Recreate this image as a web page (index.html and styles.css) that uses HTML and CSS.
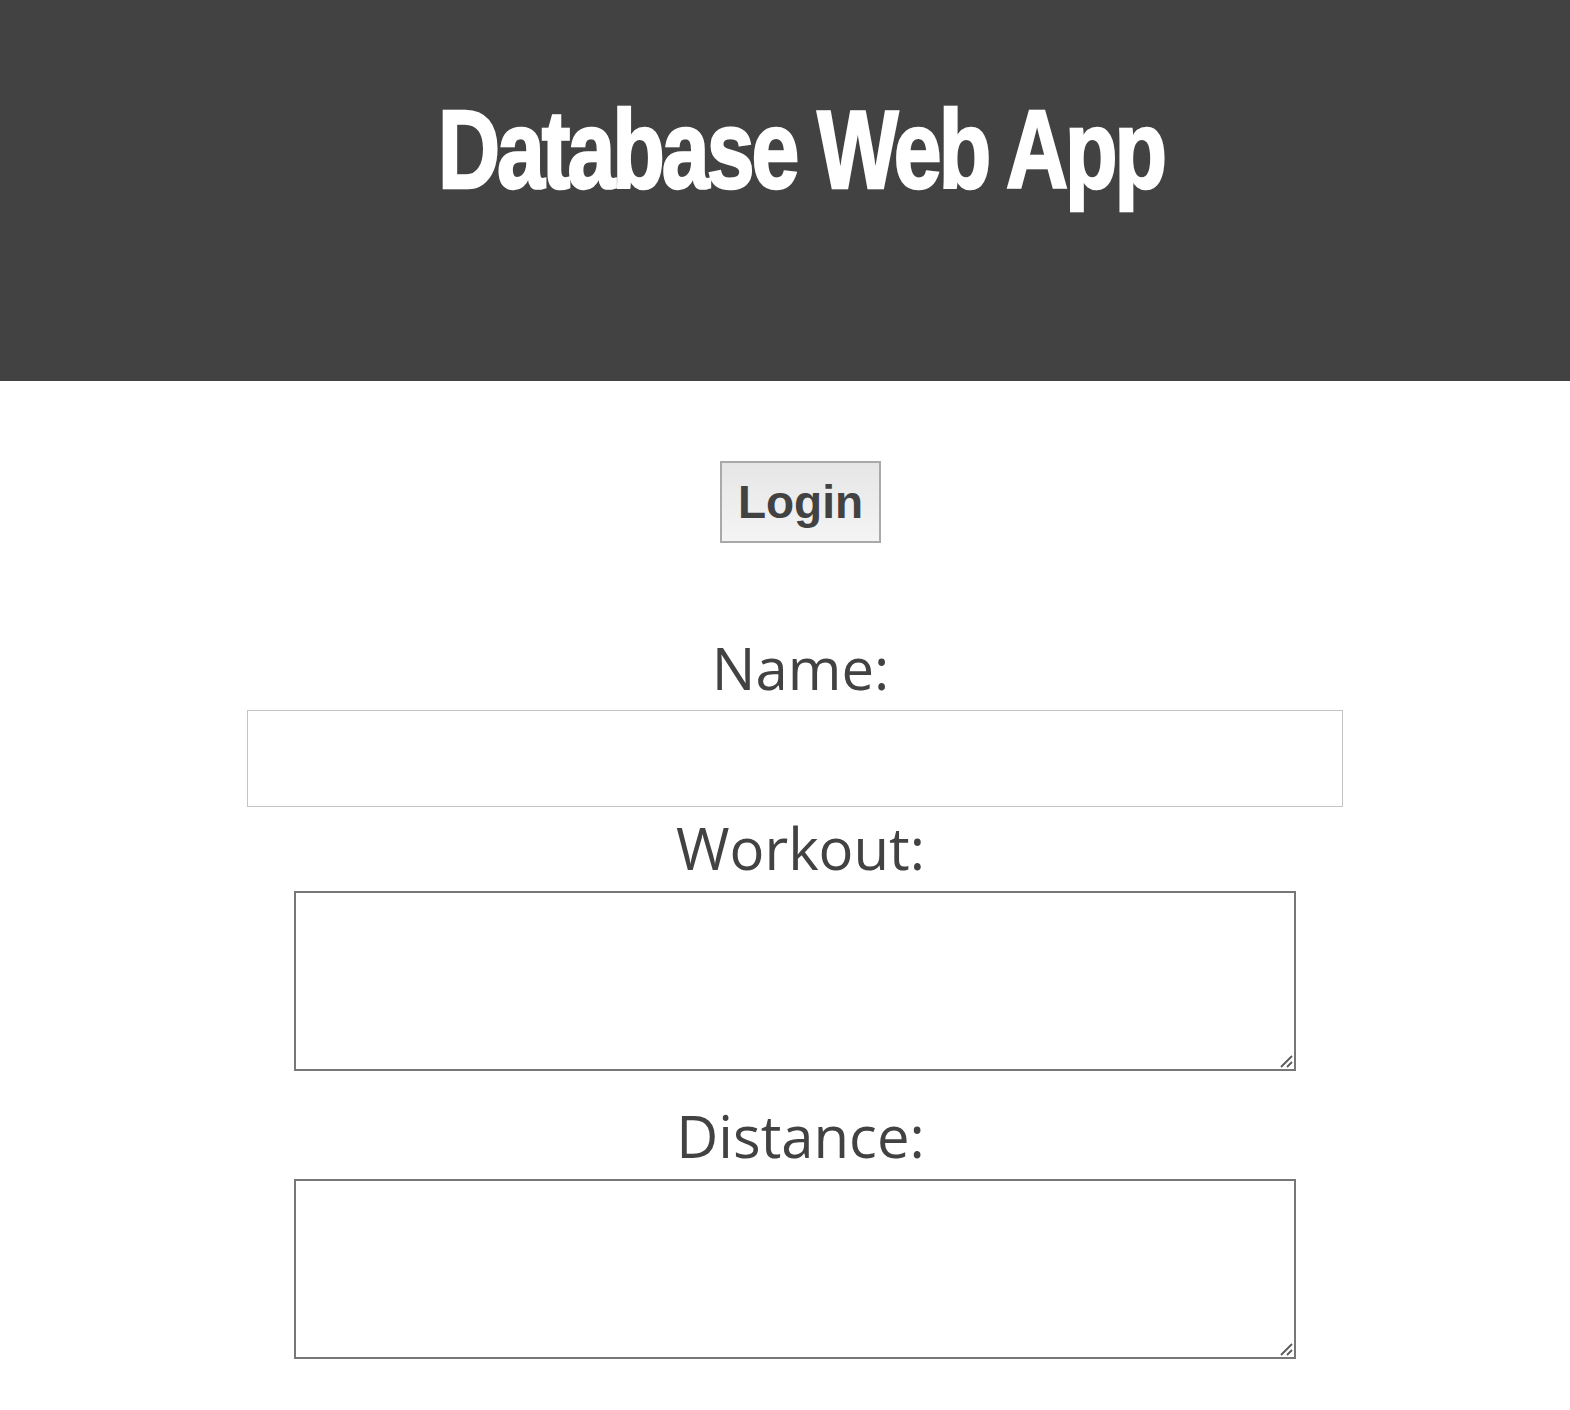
FILE: index.html
```html
<!DOCTYPE html>
<html lang="en">
<head>
<meta charset="utf-8">
<title>Database Web App</title>
<link rel="stylesheet" href="styles.css">
</head>
<body>
<header class="banner">
  <h1 class="banner-title">Database Web App</h1>
</header>
<main class="content">
  <button class="login-btn" type="button">Login</button>
  <form class="entry-form">
    <label class="field-label label-name" for="name">Name:</label>
    <input class="name-input" id="name" type="text">
    <label class="field-label label-workout" for="workout">Workout:</label>
    <div class="area-wrap">
      <textarea class="big-area" id="workout"></textarea>
      <svg class="grip" width="16" height="16" viewBox="0 0 16 16" aria-hidden="true"><path d="M3 14 L14 3 M9 14 L14 9" stroke="#5a5a5a" stroke-width="1.8" fill="none"/></svg>
    </div>
    <label class="field-label label-distance" for="distance">Distance:</label>
    <div class="area-wrap">
      <textarea class="big-area" id="distance"></textarea>
      <svg class="grip" width="16" height="16" viewBox="0 0 16 16" aria-hidden="true"><path d="M3 14 L14 3 M9 14 L14 9" stroke="#5a5a5a" stroke-width="1.8" fill="none"/></svg>
    </div>
  </form>
</main>
</body>
</html>
```
FILE: styles.css
```css
html, body {
  margin: 0;
  padding: 0;
  background: #ffffff;
}
body {
  font-family: "Open Sans", "Liberation Sans", sans-serif;
  color: #424242;
}
.banner {
  background: #424242;
  height: 381px;
  box-sizing: border-box;
  padding: 87px 0 0 32px;
  display: flex;
  justify-content: center;
  align-items: flex-start;
}
.banner-title {
  margin: 0;
  font-family: "Liberation Sans Narrow", "Liberation Sans", sans-serif;
  font-weight: 700;
  font-size: 86px;
  line-height: 96px;
  letter-spacing: -3px;
  color: #ffffff;
  -webkit-text-stroke: 2px #ffffff;
  transform: scaleY(1.29);
  transform-origin: center top;
}
.content {
  display: flex;
  flex-direction: column;
  align-items: center;
  padding: 80px 0 60px 19px;
}
.login-btn {
  width: 161px;
  height: 82px;
  margin-left: 12px;
  border: 2px solid #a9a9a9;
  background: linear-gradient(#e6e6e6, #f4f4f4);
  font-family: "Liberation Sans", Arial, sans-serif;
  font-weight: 700;
  font-size: 46px;
  color: #424242;
  padding: 0;
}
.entry-form {
  display: flex;
  flex-direction: column;
  align-items: center;
  margin-top: 90px;
}
.field-label {
  font-family: "Open Sans", "Liberation Sans", sans-serif;
  font-size: 58px;
  line-height: 70px;
  padding-left: 12px;
  color: #424242;
}
.label-name {
  margin-bottom: 7px;
}
.name-input {
  width: 1096px;
  height: 97px;
  box-sizing: border-box;
  border: 1px solid #c4c4c4;
  margin: 0;
  padding: 0 10px;
  font-size: 30px;
}
.label-workout {
  margin-top: 6px;
}
.area-wrap {
  position: relative;
  margin-top: 8px;
  display: flex;
}
.big-area {
  width: 1002px;
  height: 180px;
  box-sizing: border-box;
  border: 2px solid #777777;
  margin: 0;
  padding: 4px;
  resize: none;
  font-size: 20px;
}
.grip {
  position: absolute;
  right: 2px;
  bottom: 2px;
  pointer-events: none;
}
.label-distance {
  margin-top: 30px;
}
```
